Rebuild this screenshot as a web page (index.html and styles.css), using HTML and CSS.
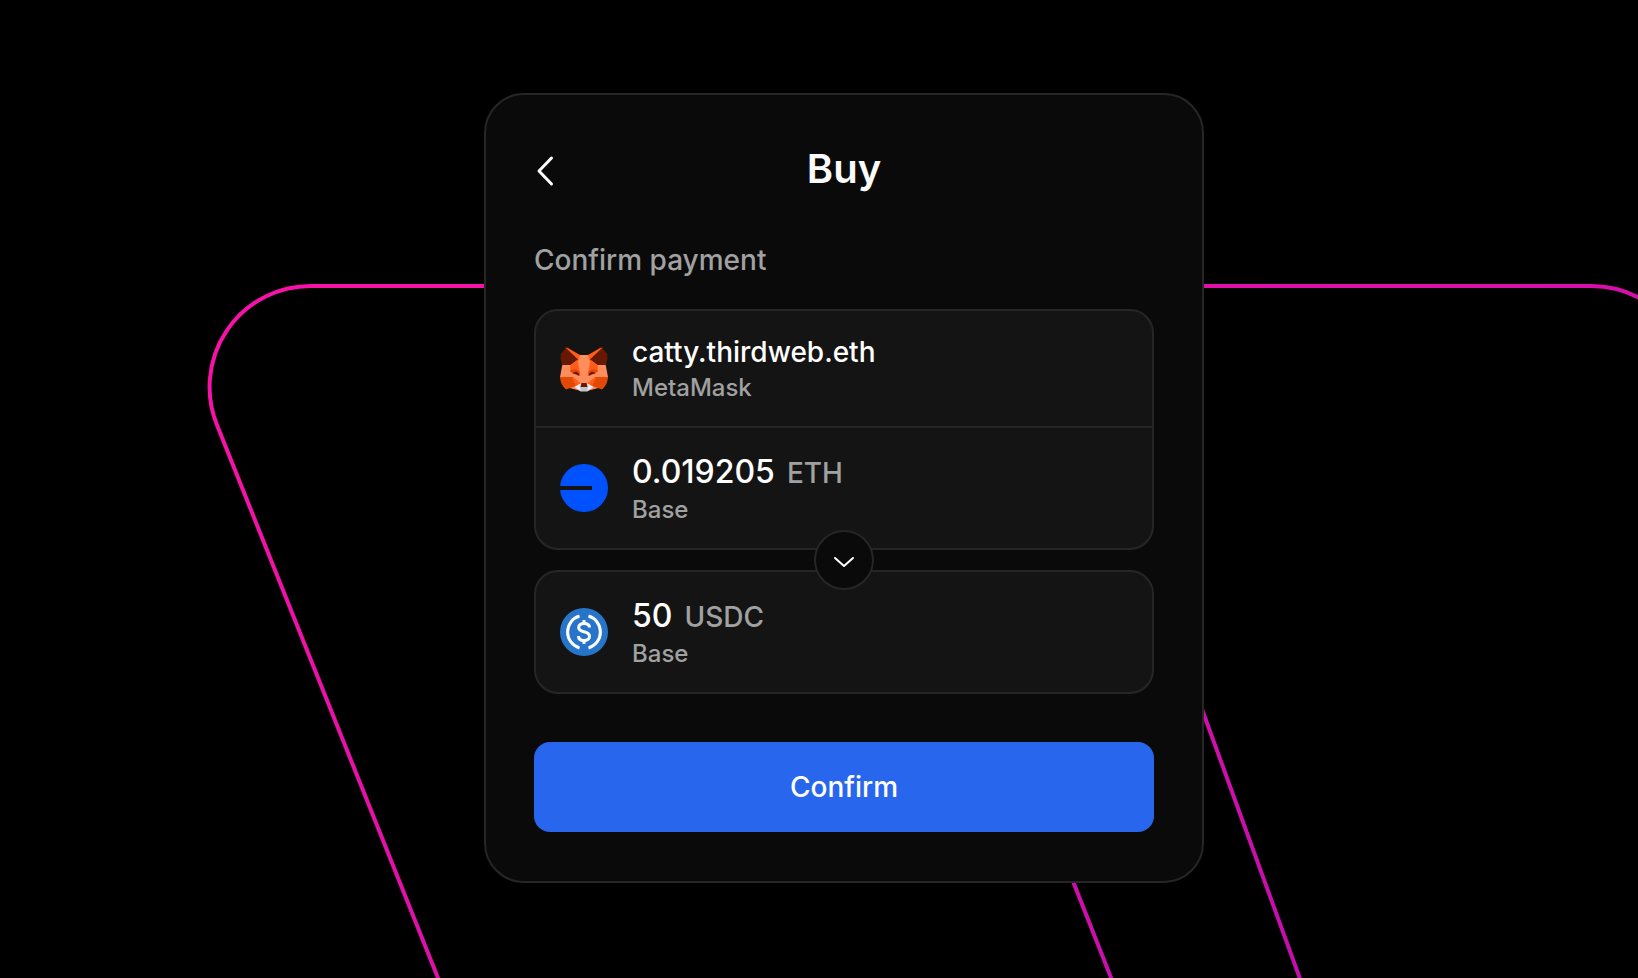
FILE: index.html
```
<!DOCTYPE html>
<html lang="en">
<head>
  <meta charset="UTF-8" />
  <meta name="viewport" content="width=device-width, initial-scale=1.0" />
  <title>Buy</title>
  <link rel="stylesheet" href="styles.css">
</head>
<body>
  <!-- decorative lines behind the card -->
  <svg class="backdrop" viewBox="0 0 1638 978" preserveAspectRatio="xMidYMid slice" fill="none" aria-hidden="true">
    <defs>
      <linearGradient id="pink" gradientUnits="userSpaceOnUse" x1="300" y1="400" x2="2390" y2="3254">
        <stop offset="0" stop-color="#f612a6" />
        <stop offset="1" stop-color="#5204bf" />
      </linearGradient>
    </defs>
    <g stroke="url(#pink)" stroke-width="4">
      <path d="M446 998 L217 425 A101 101 0 0 1 311 286 H1591 A102 102 0 0 1 1686 350" />
      <path d="M1163 602 L1307 998" />
      <path d="M1054 833 L1119 998" />
    </g>
  </svg>

  <main class="page">
    <section class="card">
      <header class="card-header">
        <button type="button" class="back" aria-label="Back">
          <svg width="24" height="36" viewBox="0 0 24 36" fill="none" stroke="#fff" stroke-width="3" stroke-linecap="round" stroke-linejoin="round">
            <path d="M17.5 7 L5 20 L17.5 33" />
          </svg>
        </button>
        <h1>Buy</h1>
      </header>

      <h2>Confirm payment</h2>

      <div class="payment">
        <div class="box">
          <div class="row">
            <svg class="icon" viewBox="0 0 48 48" aria-hidden="true">
              <path fill="#ff8d5d" d="M2.5 19 L10 20 L17 14 L19 10 H29 L31 14 L38 20 L45.5 19 L48 32 L42 42 L27 46 H21 L6 42 L0 32 Z" />
              <!-- ears -->
              <path fill="#ff5c16" d="M5 2.7 H7.5 L20 10 L18 17 Z" />
              <path fill="#ff5c16" d="M43 2.7 H40.5 L28 10 L30 17 Z" />
              <path fill="#661800" d="M6 3 L1 8.500 L0.5 13 L2 20 H10.500 L18 14.500 Z" />
              <path fill="#661800" d="M42 3 L47 8.500 L47.500 13 L46 20 H37.500 L30 14.500 Z" />
              <!-- brows and eyes -->
              <path fill="#ff5c16" d="M10.500 20.500 L17.500 15 L20.500 31 L19 30 L10 26 Z" />
              <path fill="#ff5c16" d="M37.500 20.500 L30.500 15 L27.500 31 L29 30 L38 26 Z" />
              <path fill="#e34807" d="M10 26.500 Q14 22.500 19 26 L20 31 L14 29 Z" />
              <path fill="#e34807" d="M38 26.500 Q34 22.500 29 26 L28 31 L34 29 Z" />
              <path fill="#661800" d="M12.500 28.500 Q16 25 19 28.500 L18.500 31 Q17 28.500 12.500 28.500 Z" />
              <path fill="#661800" d="M35.500 28.500 Q32 25 29 28.500 L29.500 31 Q31 28.500 35.500 28.500 Z" />
              <!-- jaw and snout -->
              <path fill="#e34807" d="M0 32 H13 L16 41 L6 44.500 Q0.500 40 0 32 Z" />
              <path fill="#e34807" d="M48 32 H35 L32 41 L42 44.500 Q47.500 40 48 32 Z" />
              <path fill="#ff5c16" d="M13 32 L20.500 38.500 L16 41 L12 33 Z" />
              <path fill="#ff5c16" d="M35 32 L27.500 38.500 L32 41 L36 33 Z" />
              <path fill="#e7ebf6" d="M14.500 42 L20.500 38.500 L21 46.500 Z M33.500 42 L27.500 38.500 L27 46.500 Z" />
              <path fill="#c0c4cd" d="M20.500 41 H27.500 V46.500 H20.500 Z" />
              <path fill="#661800" d="M21.500 38 H26.500 L27.500 42 H20.500 Z" />
            </svg>
            <div class="details">
              <div class="name">catty.thirdweb.eth</div>
              <div class="sub">MetaMask</div>
            </div>
          </div>
          <div class="row">
            <svg class="icon" viewBox="0 0 48 48" aria-hidden="true">
              <circle cx="24" cy="24" r="24" fill="#0052ff" />
              <path fill="#141414" d="M0 22 H32 V26 H0 Z" />
            </svg>
            <div class="details">
              <div class="amount">0.019205 <span class="token">ETH</span></div>
              <div class="sub">Base</div>
            </div>
          </div>
        </div>

        <div class="arrow">
          <svg width="24" height="24" viewBox="0 0 24 24" fill="none" stroke="#fff" stroke-width="2" stroke-linecap="round" stroke-linejoin="round" aria-hidden="true">
            <path d="M3 10 L12 18 L21 10" />
          </svg>
        </div>

        <div class="box">
          <div class="row">
            <svg class="icon" viewBox="0 0 48 48" fill="none" stroke="#fff" stroke-width="3" aria-hidden="true">
              <circle cx="24" cy="24" r="24" fill="#2775ca" stroke="none" />
              <path d="M19.500 8 A16.700 16.700 0 0 0 19.500 40" />
              <path d="M28.500 8 A16.700 16.700 0 0 1 28.500 40" />
              <path d="M29.500 19.500 C29.500 16.500 27 15.500 24 15.500 C21 15.500 18.700 17 18.700 19.500 C18.700 25.500 29.500 22 29.500 28.300 C29.500 31 27 32.500 24 32.500 C21 32.500 18.500 31.200 18.500 28" />
              <path d="M24 12 V16 M24 32 V36" />
            </svg>
            <div class="details">
              <div class="amount">50 <span class="token">USDC</span></div>
              <div class="sub">Base</div>
            </div>
          </div>
        </div>
      </div>

      <button type="button" class="confirm">Confirm</button>
    </section>
  </main>
</body>
</html>
```
FILE: styles.css
```
* {
  box-sizing: border-box;
}
body {
  margin: 0;
  background: #000;
  color: #fff;
  font-family: Inter, sans-serif;
  font-weight: 500;
}
h1, h2 {
  margin: 0;
}
button {
  border: 0;
  padding: 0;
  font: inherit;
  color: inherit;
  cursor: pointer;
}
svg {
  display: block;
}
.backdrop {
  position: absolute;
  top: 0;
  left: 0;
  width: 100%;
  height: 100%;
}
.page {
  position: relative;
  display: flex;
  justify-content: center;
  padding: 93px 0 95px 50px;
}
.card {
  width: 720px;
  max-width: 100%;
  padding: 48px 48px 49px;
  background: #0a0a0a;
  border: 2px solid #262626;
  border-radius: 40px;
}
.card-header {
  display: grid;
  grid-template-columns: 1fr auto 1fr;
  align-items: center;
  margin-bottom: 48px;
}
.back {
  justify-self: start;
  background: none;
}
h1 {
  font-size: 40px;
  line-height: 52px;
  font-weight: 600;
  color: #fafafa;
}
h2 {
  margin-bottom: 32px;
  font-size: 28px;
  line-height: 34px;
  font-weight: 500;
  color: #a1a1a1;
}
.payment {
  position: relative;
  display: flex;
  flex-direction: column;
  gap: 20px;
  margin-bottom: 48px;
}
.box {
  background: #141414;
  border: 2px solid #262626;
  border-radius: 24px;
}
.row {
  display: flex;
  align-items: center;
  gap: 24px;
  padding: 24px;
}
.row + .row {
  border-top: 2px solid #262626;
}
.icon {
  width: 48px;
  height: 48px;
  flex: none;
}
.details {
  display: flex;
  flex-direction: column;
  gap: 4px;
}
.name {
  font-size: 28px;
  line-height: 34px;
}
.amount {
  display: flex;
  align-items: baseline;
  gap: 12px;
  font-size: 32px;
  line-height: 39px;
}
.token {
  font-size: 28px;
  line-height: 34px;
  color: #a1a1a1;
}
.sub {
  font-size: 24px;
  line-height: 29px;
  color: #a1a1a1;
}
/* sits over the gap between the two boxes */
.arrow {
  position: absolute;
  left: 50%;
  bottom: 104px;
  display: grid;
  place-items: center;
  width: 60px;
  height: 60px;
  margin-left: -30px;
  background: #0a0a0a;
  border: 2px solid #262626;
  border-radius: 50%;
}
.confirm {
  display: block;
  width: 100%;
  height: 90px;
  background: #2867ed;
  border-radius: 16px;
  font-size: 28px;
}
```
